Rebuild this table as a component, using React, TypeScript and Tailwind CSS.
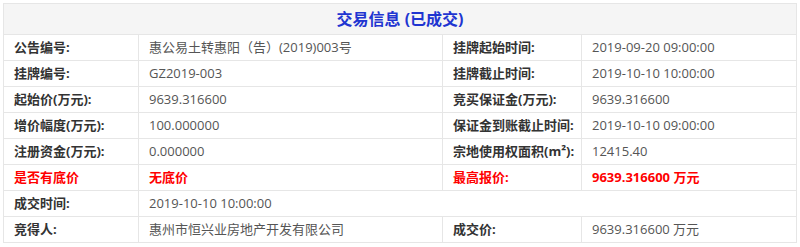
import React from 'react';

type Cell = { text: string; red?: boolean };
type Row = { l1: Cell; v1: Cell; l2?: Cell; v2?: Cell; span?: boolean };

const rows: Row[] = [
  { l1: { text: '公告编号:' }, v1: { text: '惠公易土转惠阳（告）(2019)003号' }, l2: { text: '挂牌起始时间:' }, v2: { text: '2019-09-20 09:00:00' } },
  { l1: { text: '挂牌编号:' }, v1: { text: 'GZ2019-003' }, l2: { text: '挂牌截止时间:' }, v2: { text: '2019-10-10 10:00:00' } },
  { l1: { text: '起始价(万元):' }, v1: { text: '9639.316600' }, l2: { text: '竞买保证金(万元):' }, v2: { text: '9639.316600' } },
  { l1: { text: '增价幅度(万元):' }, v1: { text: '100.000000' }, l2: { text: '保证金到账截止时间:' }, v2: { text: '2019-10-10 09:00:00' } },
  { l1: { text: '注册资金(万元):' }, v1: { text: '0.000000' }, l2: { text: '宗地使用权面积(m²):' }, v2: { text: '12415.40' } },
  { l1: { text: '是否有底价', red: true }, v1: { text: '无底价', red: true }, l2: { text: '最高报价:', red: true }, v2: { text: '9639.316600 万元', red: true } },
  { l1: { text: '成交时间:' }, v1: { text: '2019-10-10 10:00:00' }, span: true },
  { l1: { text: '竞得人:' }, v1: { text: '惠州市恒兴业房地产开发有限公司' }, l2: { text: '成交价:' }, v2: { text: '9639.316600 万元' } },
];

const labelCls = (c: Cell) =>
  `border border-[#e6e6e6] pl-[10px] font-bold ${c.red ? 'text-[#ff0000]' : 'text-[#333]'}`;
const valueCls = (c: Cell) =>
  `border border-[#e6e6e6] pl-[10px] ${c.red ? 'text-[#ff0000] font-bold' : 'text-[#555]'}`;

export default function App() {
  return (
    <div className="bg-white w-[800px] h-[247px] p-[3px] font-['Open_Sans','Noto_Sans_CJK_SC',sans-serif] text-[13px]">
      <table className="w-[793px] table-fixed border-collapse">
        <colgroup>
          <col className="w-[135px]" />
          <col className="w-[304px]" />
          <col className="w-[139px]" />
          <col className="w-[215px]" />
        </colgroup>
        <thead>
          <tr className="h-[31px] bg-[#f5f5f5]">
            <th colSpan={4} className="border border-[#e6e6e6] text-center text-[16px] font-bold text-[#1f35d1]">
              交易信息 (已成交)
            </th>
          </tr>
        </thead>
        <tbody>
          {rows.map((r, i) => (
            <tr key={i} className="h-[26px]">
              <td className={labelCls(r.l1)}>{r.l1.text}</td>
              {r.span ? (
                <td colSpan={3} className={valueCls(r.v1)}>{r.v1.text}</td>
              ) : (
                <>
                  <td className={valueCls(r.v1)}>{r.v1.text}</td>
                  <td className={labelCls(r.l2!)}>{r.l2!.text}</td>
                  <td className={valueCls(r.v2!)}>{r.v2!.text}</td>
                </>
              )}
            </tr>
          ))}
        </tbody>
      </table>
    </div>
  );
}
